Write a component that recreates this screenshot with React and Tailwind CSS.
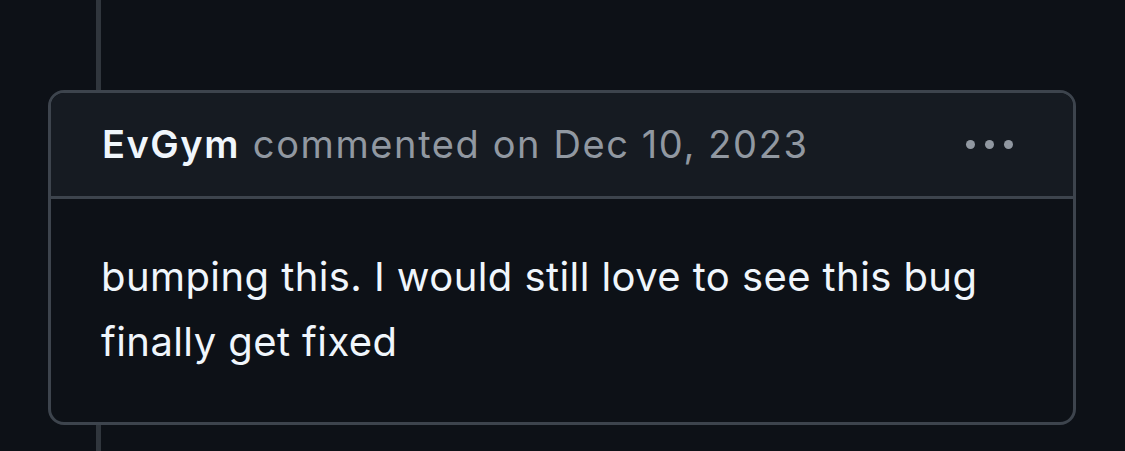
export default function App() {
  return (
    <div className="w-[1125px] h-[451px] bg-[#0d1117] overflow-hidden" style={{ fontFamily: 'Inter, "Noto Sans", sans-serif' }}>
      <div className="ml-[96px] w-[5px] h-[91px] bg-[#30363d]" />
      <div className="ml-[48px] w-[1028px] h-[335px] -mt-px border-[3px] border-[#3d444d] rounded-[16px] overflow-hidden flex flex-col">
        <div className="h-[106px] bg-[#161b22] border-b-[3px] border-[#3d444d] flex items-center pl-[51px] pr-[60px]">
          <span className="text-[38px] font-semibold text-[#f0f6fc] tracking-[1.5px]">EvGym</span>
          <span className="text-[38px] text-[#9198a1] ml-[13px] tracking-[1.6px]">commented on Dec 10, 2023</span>
          <div className="ml-auto flex gap-[10px] items-center">
            <span className="w-[9px] h-[9px] rounded-full bg-[#9198a1]" />
            <span className="w-[9px] h-[9px] rounded-full bg-[#9198a1]" />
            <span className="w-[9px] h-[9px] rounded-full bg-[#9198a1]" />
          </div>
        </div>
        <div className="pl-[50px] pr-[60px] pt-[45px] text-[40px] leading-[65px] text-[#f0f6fc] tracking-[0.42px]">
          bumping this. I would still love to see this bug finally get fixed
        </div>
      </div>
      <div className="ml-[96px] w-[5px] h-[40px] bg-[#30363d]" />
    </div>
  );
}
